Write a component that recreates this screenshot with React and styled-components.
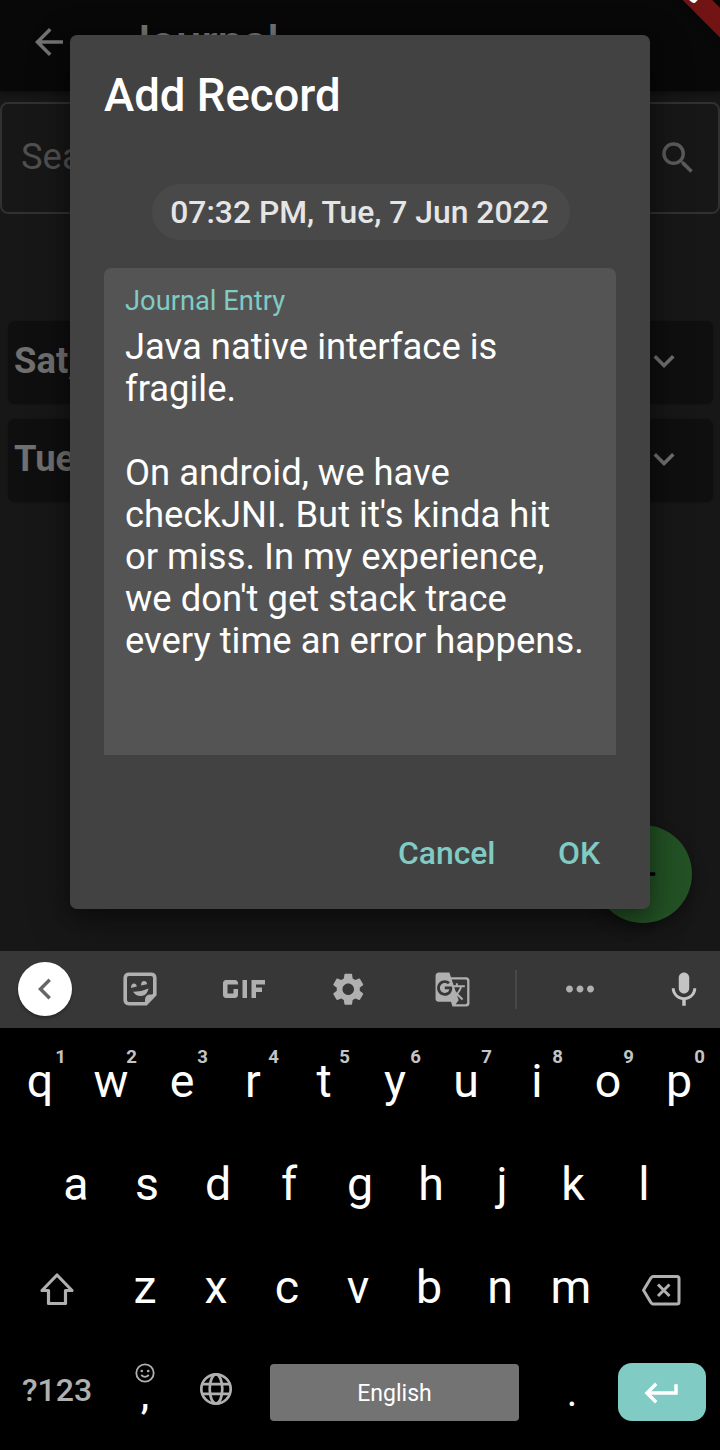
import React from "react";
import styled, { createGlobalStyle } from "styled-components";
import {
  MdArrowBack,
  MdSearch,
  MdExpandMore,
  MdAdd,
  MdChevronLeft,
  MdGif,
  MdSettings,
  MdGTranslate,
  MdMoreHoriz,
  MdMic,
  MdKeyboardReturn,
} from "react-icons/md";

const GlobalStyle = createGlobalStyle`
  * { box-sizing: border-box; }
  body { margin: 0; background: #000; font-family: Roboto, sans-serif; }
  svg { display: block; flex: none; }
`;

const Screen = styled.div`
  width: 720px;
  height: 1450px;
  display: flex;
  flex-direction: column;
  overflow: hidden;
  background: #000;
`;

const Page = styled.div`
  position: relative;
  height: 951px;
  flex: none;
  overflow: hidden;
  background: #171717;
`;

const AppBar = styled.header`
  height: 91px;
  padding: 0 28px;
  display: flex;
  align-items: flex-start;
  background: #080808;
  box-shadow: 0 2px 6px rgba(0, 0, 0, 0.45);
  color: #737373;
`;

const BackIcon = styled(MdArrowBack)`
  width: 42px;
  height: 42px;
  margin-top: 21px;
`;

const AppTitle = styled.h1`
  margin: 16px 0 0 55px;
  font-size: 45.5px;
  font-weight: 500;
  line-height: 54px;
`;

const SearchBox = styled.div`
  height: 112px;
  margin-top: 10.5px;
  padding: 0 19px 2px;
  display: flex;
  align-items: center;
  justify-content: space-between;
  border: 2px solid #313131;
  border-radius: 8px;
  color: #505050;
  font-size: 36.4px;
  line-height: 42px;
`;

const SearchIcon = styled(MdSearch)`
  width: 42px;
  height: 42px;
  margin-top: 3px;
  color: #5b5b5b;
`;

const Days = styled.div`
  margin-top: 107px;
  padding: 0 7.5px;
  display: flex;
  flex-direction: column;
  gap: 15px;
`;

const DayCard = styled.div`
  height: 83px;
  padding: 0 28px 2px 6.5px;
  display: flex;
  align-items: center;
  justify-content: space-between;
  border-radius: 7px;
  background: #0f0f0f;
  box-shadow: 0 0 2px rgba(0, 0, 0, 0.25);
  color: #707070;
  font-size: 36.4px;
  font-weight: 700;
  line-height: 80px;
`;

const ExpandIcon = styled(MdExpandMore)`
  width: 42px;
  height: 42px;
`;

const Fab = styled.div`
  position: absolute;
  left: 594px;
  top: 825px;
  width: 98px;
  height: 98px;
  border-radius: 50%;
  display: flex;
  align-items: center;
  justify-content: center;
  background: #235225;
  box-shadow: 0 6px 14px rgba(0, 0, 0, 0.35);
  color: #000;
`;

const Dialog = styled.section`
  position: absolute;
  left: 70px;
  top: 35px;
  width: 580px;
  height: 874px;
  padding: 34px 34px 0;
  display: flex;
  flex-direction: column;
  border-radius: 7px;
  background: #424242;
  box-shadow: 0 12px 40px rgba(0, 0, 0, 0.38), 0 8px 16px rgba(0, 0, 0, 0.2);
`;

const DialogTitle = styled.h2`
  margin: 0;
  color: #fff;
  font-size: 45.5px;
  font-weight: 500;
  line-height: 53px;
`;

const DateChip = styled.button`
  align-self: center;
  height: 56px;
  width: 418px;
  margin: 62px 0 0 2px;
  padding: 0 3px 0 0;
  border: 0;
  border-radius: 28px;
  background: #494949;
  color: #e5e5e5;
  font: 500 31.85px/56px Roboto, sans-serif;
  white-space: nowrap;
`;

const Field = styled.div`
  height: 487px;
  flex: none;
  margin-top: 28px;
  padding: 17px 21px 0;
  border-radius: 7px 7px 0 0;
  background: #545454;
`;

const FieldLabel = styled.div`
  color: #80cbc4;
  font-size: 27.3px;
  line-height: 32px;
`;

const FieldText = styled.div`
  margin-top: 9px;
  color: #fff;
  font-size: 36.4px;
  line-height: 42px;
  white-space: pre;
`;

const Actions = styled.div`
  margin-top: 67px;
  padding-right: 16px;
  display: flex;
  justify-content: flex-end;
  gap: 62.5px;
`;

const Action = styled.button`
  padding: 0;
  border: 0;
  background: none;
  color: #80cbc4;
  font: 500 31.85px/62px Roboto, sans-serif;
`;

const Ribbon = styled.div`
  position: absolute;
  left: 578px;
  top: -30px;
  width: 200px;
  height: 20.5px;
  transform: rotate(45deg);
  background: #731414;
  box-shadow: 0 0 9px rgba(0, 0, 0, 0.5);
  color: #fff;
  font-size: 17.85px;
  font-weight: 900;
  line-height: 20.5px;
  text-align: center;
`;

const Keyboard = styled.div`
  flex: 1;
  display: flex;
  flex-direction: column;
  background: #000;
`;

const Strip = styled.div`
  height: 77px;
  margin-bottom: 2px;
  padding: 0 14px 1px 18px;
  display: flex;
  align-items: center;
  background: #373737;
  color: #b0b0b0;
`;

const Collapse = styled.div`
  width: 54px;
  height: 54px;
  margin-right: 16px;
  border-radius: 50%;
  display: flex;
  align-items: center;
  justify-content: center;
  background: #fff;
  color: #666;
  box-shadow: 0 2px 3px rgba(0, 0, 0, 0.3);
`;

const StripItem = styled.div`
  width: 104px;
  display: flex;
  justify-content: center;
`;

const Divider = styled.div`
  width: 2px;
  height: 39px;
  margin: 0 11px;
  background: #484848;
`;

const MicIcon = styled(MdMic)`
  width: 42px;
  height: 42px;
  margin: 1px 0 0 31px;
  color: #c4c4c4;
`;

const KeyRow = styled.div`
  height: 103px;
  padding-right: ${(p) => p.$shift || 0}px;
  display: flex;
  align-items: center;
  justify-content: center;
`;

const Key = styled.div`
  position: relative;
  width: ${(p) => p.$w || 71}px;
  height: 103px;
  padding-top: ${(p) => p.$drop || 0}px;
  display: flex;
  flex: none;
  align-items: center;
  justify-content: center;
  color: ${(p) => (p.$dim ? "#b0b0b0" : "#fff")};
  font-size: ${(p) => p.$size || 46.5}px;
  font-weight: ${(p) => p.$weight || 400};
  line-height: 103px;
`;

const Hint = styled.span`
  position: absolute;
  top: 16px;
  left: 46px;
  width: 20px;
  color: #c4c4c4;
  font-size: 18.6px;
  font-weight: 700;
  line-height: 22px;
  text-align: center;
`;

const BottomRow = styled(KeyRow)`
  justify-content: flex-start;
  padding: 0 14px 0 4px;
`;

const CommaKey = styled(Key)`
  flex-direction: column;
  justify-content: flex-start;
  padding: 24px 1px 0 0;
  font-size: 40px;
  line-height: 20px;
`;

const Comma = styled.span`
  height: 20px;
  margin-top: 2px;
  font-size: 38px;
  font-weight: 500;
`;

const GlobeKey = styled(Key)`
  padding: 0 2px 3px 0;
`;

const PeriodKey = styled(Key)`
  margin: 3px 11px 0 17px;
  padding-left: 1px;
  font-size: 40px;
`;

const SpaceKey = styled.div`
  width: 249px;
  height: 57px;
  flex: none;
  margin: 3px 0 0 18px;
  padding-top: 1px;
  border-radius: 4px;
  background: #737373;
  color: #fff;
  font-size: 23px;
  line-height: 57px;
  text-align: center;
`;

const EnterKey = styled.div`
  width: 88px;
  height: 58px;
  flex: none;
  margin-top: 2px;
  padding-top: 3px;
  border-radius: 14px;
  display: flex;
  align-items: center;
  justify-content: center;
  background: #80cbc4;
  color: #fff;
`;

const StickerIcon = () => (
  <svg width="34" height="34" viewBox="0 0 34 34" fill="none">
    <path
      d="M6 2.200H28Q31.800 2.200 31.800 6V22.500L23 31.800H6Q2.200 31.800 2.200 28V6Q2.200 2.200 6 2.200Z"
      stroke="#b0b0b0"
      strokeWidth="3.6"
    />
    <path d="M22 33V28Q22 22.500 27.500 22.500H33L23 33Z" fill="#b0b0b0" />
    <path d="M10 19.800Q18 20 25.500 16.500Q24.500 23 18.500 24Q13 24.500 10 19.800Z" fill="#b0b0b0" />
    <path d="M8 16Q8 11.500 11 11.500Q13.500 11.500 13.800 14.500Z" fill="#b0b0b0" />
    <path d="M18 13.500Q18 9 21 9Q23.800 9 24 12.200Z" fill="#b0b0b0" />
  </svg>
);

const ShiftIcon = () => (
  <svg width="36" height="36" viewBox="0 0 36 36" fill="none" stroke="#b0b0b0" strokeWidth="3.2" strokeLinejoin="round">
    <path d="M18 3L33 18.500H26.500V31.500H9.500V18.500H3Z" />
  </svg>
);

const BackspaceIcon = () => (
  <svg width="40" height="32" viewBox="0 0 40 32" fill="none" stroke="#b0b0b0" strokeLinejoin="round">
    <path d="M12 2.500H36Q38 2.500 38 4.500V28Q38 30 36 30H12Q11 30 10 28.700L2.500 16.250L10 3.800Q11 2.500 12 2.500Z" strokeWidth="3" />
    <path d="M17 10.500L28.500 22M28.500 10.500L17 22" strokeWidth="3" />
  </svg>
);

const SmileIcon = () => (
  <svg width="20" height="20" viewBox="0 0 20 20" fill="none" stroke="#b0b0b0" strokeWidth="1.8">
    <circle cx="10" cy="10" r="8.700" />
    <path d="M6.200 12Q10 15.800 13.800 12" />
    <circle cx="6.800" cy="8" r="1.300" fill="#b0b0b0" stroke="none" />
    <circle cx="13.200" cy="8" r="1.300" fill="#b0b0b0" stroke="none" />
  </svg>
);

const GlobeIcon = () => (
  <svg width="34" height="34" viewBox="0 0 34 34" fill="none" stroke="#b0b0b0" strokeWidth="2.7">
    <circle cx="17" cy="17" r="14.700" />
    <ellipse cx="17" cy="17" rx="6.300" ry="14.700" />
    <path d="M3.200 12.200H30.800M3.200 21.800H30.800" />
  </svg>
);

const entry = `Java native interface is
fragile.

On android, we have
checkJNI. But it's kinda hit
or miss. In my experience,
we don't get stack trace
every time an error happens.`;

const days = ["Sat,", "Tue,"];

export default function App() {
  return (
    <Screen>
      <GlobalStyle />
      <Page>
        <AppBar>
          <BackIcon />
          <AppTitle>Journal</AppTitle>
        </AppBar>
        <SearchBox>
          Search
          <SearchIcon />
        </SearchBox>
        <Days>
          {days.map((d) => (
            <DayCard key={d}>
              {d}
              <ExpandIcon />
            </DayCard>
          ))}
        </Days>
        <Fab>
          <MdAdd size={42} />
        </Fab>
        <Dialog>
          <DialogTitle>Add Record</DialogTitle>
          <DateChip>07:32 PM, Tue, 7 Jun 2022</DateChip>
          <Field>
            <FieldLabel>Journal Entry</FieldLabel>
            <FieldText>{entry}</FieldText>
          </Field>
          <Actions>
            <Action>Cancel</Action>
            <Action>OK</Action>
          </Actions>
        </Dialog>
        <Ribbon>DEBUG</Ribbon>
      </Page>
      <Keyboard>
        <Strip>
          <Collapse>
            <MdChevronLeft size={42} />
          </Collapse>
          <StripItem>
            <StickerIcon />
          </StripItem>
          <StripItem>
            <MdGif size={72} />
          </StripItem>
          <StripItem>
            <MdSettings size={38.5} />
          </StripItem>
          <StripItem>
            <MdGTranslate size={37} />
          </StripItem>
          <Divider />
          <StripItem>
            <MdMoreHoriz size={42} />
          </StripItem>
          <MicIcon />
        </Strip>
        <KeyRow $shift={1}>
          {[..."qwertyuiop"].map((k, i) => (
            <Key key={k}>
              {k}
              <Hint>{(i + 1) % 10}</Hint>
            </Key>
          ))}
        </KeyRow>
        <KeyRow>
          {[..."asdfghjkl"].map((k) => (
            <Key key={k}>{k}</Key>
          ))}
        </KeyRow>
        <KeyRow $shift={2}>
          <Key $w={106} $drop={4}>
            <ShiftIcon />
          </Key>
          {[..."zxcvbnm"].map((k) => (
            <Key key={k}>{k}</Key>
          ))}
          <Key $w={108} $drop={5}>
            <BackspaceIcon />
          </Key>
        </KeyRow>
        <BottomRow>
          <Key $w={106} $dim $size={32} $weight={500}>
            ?123
          </Key>
          <CommaKey>
            <SmileIcon />
            <Comma>,</Comma>
          </CommaKey>
          <GlobeKey $dim>
            <GlobeIcon />
          </GlobeKey>
          <SpaceKey>English</SpaceKey>
          <PeriodKey>.</PeriodKey>
          <EnterKey>
            <MdKeyboardReturn size={42} />
          </EnterKey>
        </BottomRow>
      </Keyboard>
    </Screen>
  );
}
